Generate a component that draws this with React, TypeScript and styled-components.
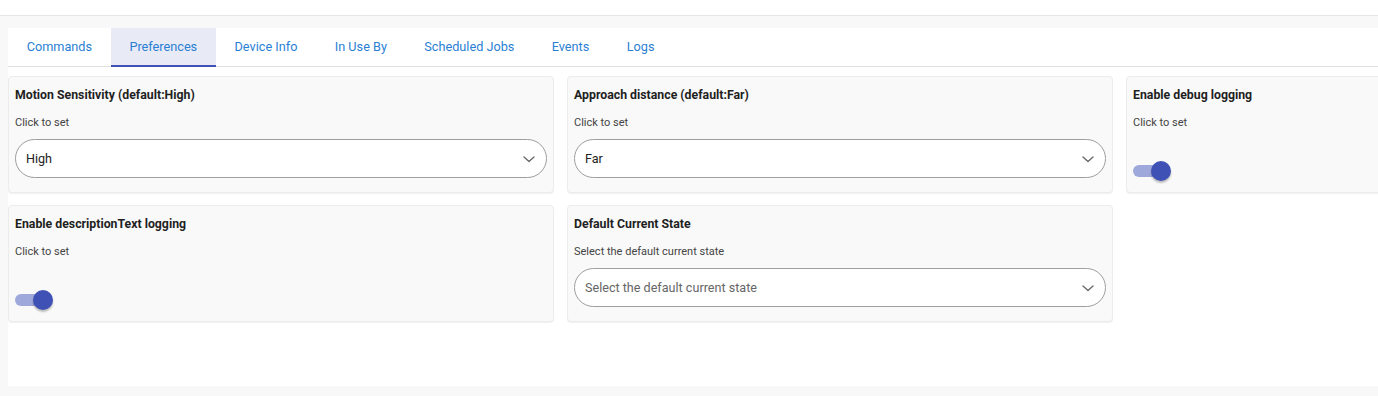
import styled, { createGlobalStyle } from 'styled-components';

const GlobalStyle = createGlobalStyle`
  html, body {
    margin: 0;
    padding: 0;
    background: #f8f8f8;
    font-family: Roboto, "Liberation Sans", Arial, sans-serif;
    overflow: hidden;
  }
`;

const tabs = ['Commands', 'Preferences', 'Device Info', 'In Use By', 'Scheduled Jobs', 'Events', 'Logs'];

function Chevron() {
  return (
    <svg width="12" height="12" viewBox="0 0 12 12" fill="none">
      <path d="M1 4 L6 8.5 L11 4" stroke="#666" strokeWidth="1.3" strokeLinecap="round" strokeLinejoin="round" />
    </svg>
  );
}

function SelectCard({ title, hint, value, placeholder }: { title: string; hint: string; value?: string; placeholder?: string }) {
  return (
    <Card>
      <Title>{ title }</Title>
      <Hint>{ hint }</Hint>
      <Select>
        <SelectValue $placeholder={ !value }>{ value ?? placeholder }</SelectValue>
        <Chevron />
      </Select>
    </Card>
  );
}

function ToggleCard({ title }: { title: string }) {
  return (
    <Card>
      <Title>{ title }</Title>
      <Hint>Click to set</Hint>
      <Switch>
        <Track />
        <Thumb />
      </Switch>
    </Card>
  );
}

function App() {
  return (
    <>
      <GlobalStyle />
      <TopBar />
      <Panel>
        <TabBar>
          { tabs.map((t) => (
            <Tab key={ t } $active={ t === 'Preferences' }>{ t }</Tab>
          )) }
        </TabBar>
        <Grid>
          <SelectCard title="Motion Sensitivity (default:High)" hint="Click to set" value="High" />
          <SelectCard title="Approach distance (default:Far)" hint="Click to set" value="Far" />
          <ToggleCard title="Enable debug logging" />
          <ToggleCard title="Enable descriptionText logging" />
          <SelectCard
            title="Default Current State"
            hint="Select the default current state"
            placeholder="Select the default current state"
          />
        </Grid>
      </Panel>
    </>
  );
}

const TopBar = styled.div`
  height: 15px;
  background: #fff;
  border-bottom: 1px solid #e6e6e6;
`;

const Panel = styled.div`
  width: 1672px;
  margin: 12px 0 0 8px;
  padding-bottom: 64px;
  background: #fff;
`;

const TabBar = styled.div`
  display: flex;
  border-bottom: 1px solid #e0e0e0;
`;

const Tab = styled.div<{ $active?: boolean }>`
  height: 39px;
  box-sizing: border-box;
  display: flex;
  align-items: center;
  padding: 0 18.7px;
  font-size: 12.7px;
  color: #2a7fd4;
  background: ${ ({ $active }) => ($active ? '#e8eaf6' : 'transparent') };
  border-bottom: 2px solid ${ ({ $active }) => ($active ? '#3f51b5' : 'transparent') };
  margin-bottom: -1px;
`;

const Grid = styled.div`
  display: grid;
  grid-template-columns: repeat(3, 546px);
  gap: 12px 13px;
  margin-top: 9px;
`;

const Card = styled.div`
  display: flex;
  flex-direction: column;
  box-sizing: border-box;
  padding: 10px 6px 14px 6px;
  background: #f9f9f9;
  border: 1px solid #ececec;
  border-radius: 4px;
  box-shadow: 0 1px 1px rgba(0, 0, 0, 0.06);
`;

const Title = styled.div`
  font-size: 12.3px;
  line-height: 16px;
  font-weight: 700;
  color: #1f1f1f;
`;

const Hint = styled.div`
  margin-top: 13px;
  font-size: 11px;
  line-height: 14px;
  color: #444;
`;

const Select = styled.div`
  margin-top: 9px;
  height: 39px;
  box-sizing: border-box;
  display: flex;
  align-items: center;
  justify-content: space-between;
  padding: 0 11px 0 10px;
  background: #fff;
  border: 1px solid #9e9e9e;
  border-radius: 20px;
`;

const SelectValue = styled.span<{ $placeholder?: boolean }>`
  font-size: 12.6px;
  color: ${ ({ $placeholder }) => ($placeholder ? '#666' : '#222') };
`;

const Switch = styled.div`
  position: relative;
  margin-top: 33px;
  width: 38px;
  height: 15px;
`;

const Track = styled.div`
  position: absolute;
  left: 0;
  top: 2px;
  width: 34px;
  height: 12px;
  border-radius: 6px;
  background: #9fa8da;
`;

const Thumb = styled.div`
  position: absolute;
  left: 18px;
  top: -2px;
  width: 20px;
  height: 20px;
  border-radius: 50%;
  background: #3f51b5;
  box-shadow: 0 2px 2px rgba(0, 0, 0, 0.25);
`;

export default App;
